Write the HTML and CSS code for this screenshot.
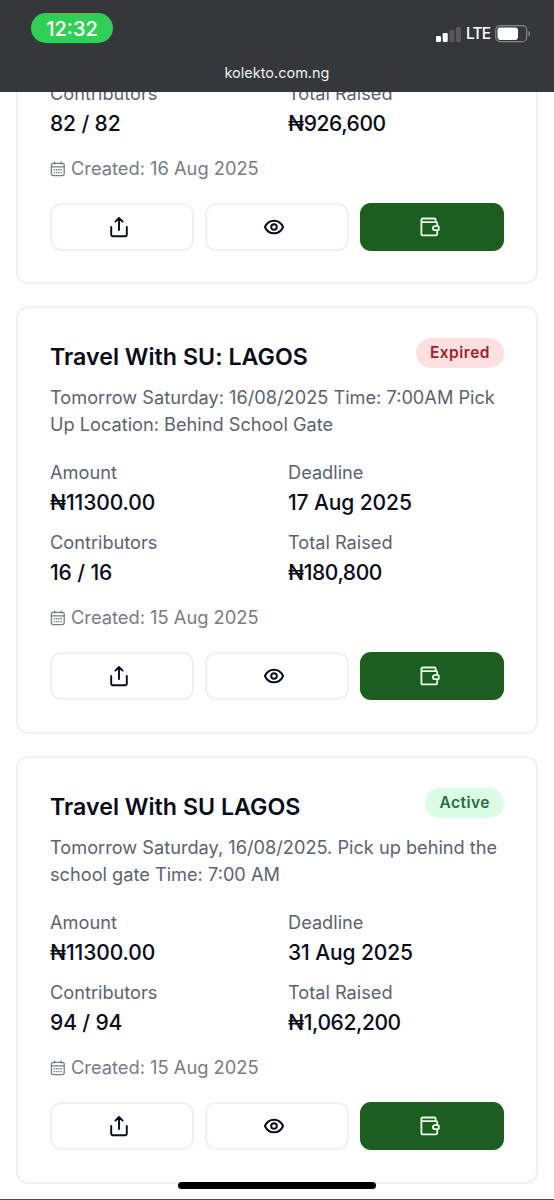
FILE: index.html
```
<!DOCTYPE html>
<html lang="en">
<head>
<meta charset="utf-8">
<title>Kolekto</title>
<link rel="stylesheet" href="styles.css">
</head>
<body>
<svg class="sprite" aria-hidden="true">
  <symbol id="calendar" viewBox="0 0 16 16"><g fill="none" stroke="currentColor" stroke-width="1.3"><rect x="1.4" y="2.300" width="12.800" height="12.300" rx="1.8"/><path d="M1.400 5.800h12.800M4.600 .600v3M11.200 .600v3"/></g><path d="M3.800 8.700h8.200M3.800 11.600h8.200" stroke="currentColor" stroke-width="1.4" stroke-dasharray="1.400 .8"/></symbol>
  <symbol id="share" viewBox="0 0 20 22"><path d="M2.200 11v7.800q0 1.400 1.400 1.400h12.800q1.400 0 1.400-1.400v-7.800M10 14V2.200M6.400 5.600 10 2l3.600 3.600" fill="none" stroke="currentColor" stroke-width="1.900" stroke-linecap="round" stroke-linejoin="round"/></symbol>
  <symbol id="eye" viewBox="0 0 22 18"><g fill="none" stroke="currentColor" stroke-width="1.9"><path d="M1.900 9C3.800 4.800 6.900 2.700 11 2.700S18.200 4.800 20.100 9C18.200 13.200 15.100 15.300 11 15.300S3.800 13.200 1.900 9Z" stroke-linejoin="round"/><circle cx="11" cy="9" r="2.800"/></g></symbol>
  <symbol id="wallet" viewBox="0 0 22 22"><path d="M18.200 9.600V7.200Q18.200 6.100 17.100 6.100H2.400M18.200 14.600v3.300q0 1.500-1.500 1.500H3.900q-1.500 0-1.500-1.500V4q0-1.500 1.500-1.500h11.400q1.400 0 1.400 1.400v2.200M15.800 10.100h3.200q.8 0 .8.8v2.500q0 .8-.8.8h-3.200q-1.900-.2-1.900-2.050t1.900-2.050Z" fill="none" stroke="currentColor" stroke-width="1.800" stroke-linecap="round" stroke-linejoin="round"/></symbol>
</svg>
<div class="screen">
  <header class="topbar">
    <div class="status">
      <span class="clock">12:32</span>
      <div class="indicators">
        <svg class="signal" viewBox="0 0 25 16"><rect x="0" y="10" width="5" height="6" rx="1.200" fill="#fff"/><rect x="6.700" y="7" width="5" height="9" rx="1.200" fill="#fff"/><rect x="13.400" y="4" width="5" height="12" rx="1.200" fill="#56595c"/><rect x="20" y="1" width="5" height="15" rx="1.200" fill="#56595c"/></svg>
        <span class="network">LTE</span>
        <svg class="battery" viewBox="0 0 36 18"><rect x=".7" y=".7" width="31" height="16" rx="4.500" fill="none" stroke="#85878a" stroke-width="1.200"/><rect x="2.500" y="2.500" width="20.500" height="12.400" rx="2.800" fill="#fff"/><path d="M33.500 6v5.500q1.700-.8 1.700-2.750T33.500 6Z" fill="#85878a"/></svg>
      </div>
    </div>
    <div class="address">kolekto.com.ng</div>
  </header>
  <main class="list">
    <article class="card card-clipped">
      <dl class="facts">
        <div><dt>Contributors</dt><dd>82 / 82</dd></div>
        <div><dt>Total Raised</dt><dd class="money">₦926,600</dd></div>
      </dl>
      <p class="created"><svg><use href="#calendar"/></svg><span>Created: 16 Aug 2025</span></p>
      <div class="actions"><button class="btn"><svg class="i-share"><use href="#share"/></svg></button><button class="btn"><svg class="i-eye"><use href="#eye"/></svg></button><button class="btn primary"><svg class="i-wallet"><use href="#wallet"/></svg></button></div>
    </article>
    <article class="card">
      <div class="head"><h2>Travel With SU: LAGOS</h2><span class="badge expired">Expired</span></div>
      <p class="desc">Tomorrow Saturday: 16/08/2025 Time: 7:00AM Pick<br>Up Location: Behind School Gate</p>
      <dl class="facts">
        <div><dt>Amount</dt><dd>₦11300.00</dd></div>
        <div><dt>Deadline</dt><dd>17 Aug 2025</dd></div>
        <div><dt>Contributors</dt><dd>16 / 16</dd></div>
        <div><dt>Total Raised</dt><dd class="money">₦180,800</dd></div>
      </dl>
      <p class="created"><svg><use href="#calendar"/></svg><span>Created: 15 Aug 2025</span></p>
      <div class="actions"><button class="btn"><svg class="i-share"><use href="#share"/></svg></button><button class="btn"><svg class="i-eye"><use href="#eye"/></svg></button><button class="btn primary"><svg class="i-wallet"><use href="#wallet"/></svg></button></div>
    </article>
    <article class="card">
      <div class="head"><h2>Travel With SU LAGOS</h2><span class="badge active">Active</span></div>
      <p class="desc">Tomorrow Saturday, 16/08/2025. Pick up behind the<br>school gate Time: 7:00 AM</p>
      <dl class="facts">
        <div><dt>Amount</dt><dd>₦11300.00</dd></div>
        <div><dt>Deadline</dt><dd>31 Aug 2025</dd></div>
        <div><dt>Contributors</dt><dd>94 / 94</dd></div>
        <div><dt>Total Raised</dt><dd class="money">₦1,062,200</dd></div>
      </dl>
      <p class="created"><svg><use href="#calendar"/></svg><span>Created: 15 Aug 2025</span></p>
      <div class="actions"><button class="btn"><svg class="i-share"><use href="#share"/></svg></button><button class="btn"><svg class="i-eye"><use href="#eye"/></svg></button><button class="btn primary"><svg class="i-wallet"><use href="#wallet"/></svg></button></div>
    </article>
  </main>
  <div class="home-indicator"></div>
</div>
</body>
</html>
```
FILE: styles.css
```
* { box-sizing: border-box; margin: 0; padding: 0; }
body { font-family: Inter, "Liberation Sans", sans-serif; background: #fefefe; }
.sprite { position: absolute; width: 0; height: 0; }
.screen { position: relative; width: 554px; height: 1200px; overflow: hidden; display: flex; flex-direction: column; border-bottom: 1px solid #4b4c4e; }
.topbar { flex: none; height: 92px; background: #35383b; color: #fff; }
.status { display: flex; justify-content: space-between; padding: 13px 23px 0 31px; height: 62px; }
.clock { width: 82px; height: 30px; border-radius: 15px; background: #30cf56; font-size: 20px; font-weight: 500; line-height: 32px; text-align: center; }
.indicators { display: flex; align-items: center; height: 41px; }
.signal { width: 25px; height: 16px; }
.network { width: 24px; margin: 0 5px; font-size: 15.500px; font-weight: 500; letter-spacing: -.8px; line-height: 20px; }
.battery { width: 36px; height: 18px; }
.address { text-align: center; font-size: 14.500px; line-height: 22px; color: #eeeff0; }
.list { flex: 1; min-height: 0; overflow: hidden; padding: 0 16px; display: flex; flex-direction: column; gap: 22px; }
.card { flex: none; height: 428px; border: 2px solid #eff1f6; border-radius: 12px; padding: 30px 32px 0; background: #fefefe; }
.card-clipped { height: 192px; padding-top: 0; border-top: 0; border-radius: 0 0 12px 12px; }
.card-clipped .facts { margin-top: -12px; }
.head { display: flex; justify-content: space-between; align-items: flex-start; height: 46px; }
h2 { font-size: 23.200px; line-height: 38px; font-weight: 600; letter-spacing: .02px; color: #090c1b; white-space: nowrap; }
.badge { height: 30px; border-radius: 15px; line-height: 30px; padding: 0 14px; font-size: 15.500px; font-weight: 600; letter-spacing: .5px; }
.expired { background: #fee0e1; color: #a2242b; }
.active { background: #dbfde6; color: #246c42; }
.desc { font-size: 18.200px; line-height: 27px; color: #5c6370; white-space: nowrap; margin-bottom: 21px; }
.facts { display: grid; grid-template-columns: 1fr 1fr; column-gap: 22px; row-gap: 10px; }
dt { font-size: 18.200px; line-height: 27px; color: #5c6370; }
dd { font-size: 21px; line-height: 33px; font-weight: 500; letter-spacing: -.1px; color: #090c1b; }
.money { letter-spacing: -.4px; }
.created { display: flex; align-items: center; gap: 5px; margin-top: 15px; height: 27px; font-size: 18.300px; line-height: 27px; color: #777c87; }
.created svg { width: 16px; height: 16px; }
.actions { display: grid; grid-template-columns: repeat(3, 1fr); gap: 11px; margin-top: 21px; }
.btn { height: 48px; display: flex; align-items: center; justify-content: center; border: 2px solid #eff1f6; border-radius: 11px; background: #fefefe; color: #090c1b; }
.primary { border: 0; background: #1c5e20; color: #edfbea; }
.i-share { width: 20px; height: 22px; margin-right: 6px; }
.i-eye { width: 22px; height: 18px; margin-right: 6px; }
.i-wallet { width: 22px; height: 22px; margin-right: 5px; }
.home-indicator { position: absolute; left: 178px; bottom: 10px; width: 198px; height: 7px; border-radius: 4px; background: #000; }
```
